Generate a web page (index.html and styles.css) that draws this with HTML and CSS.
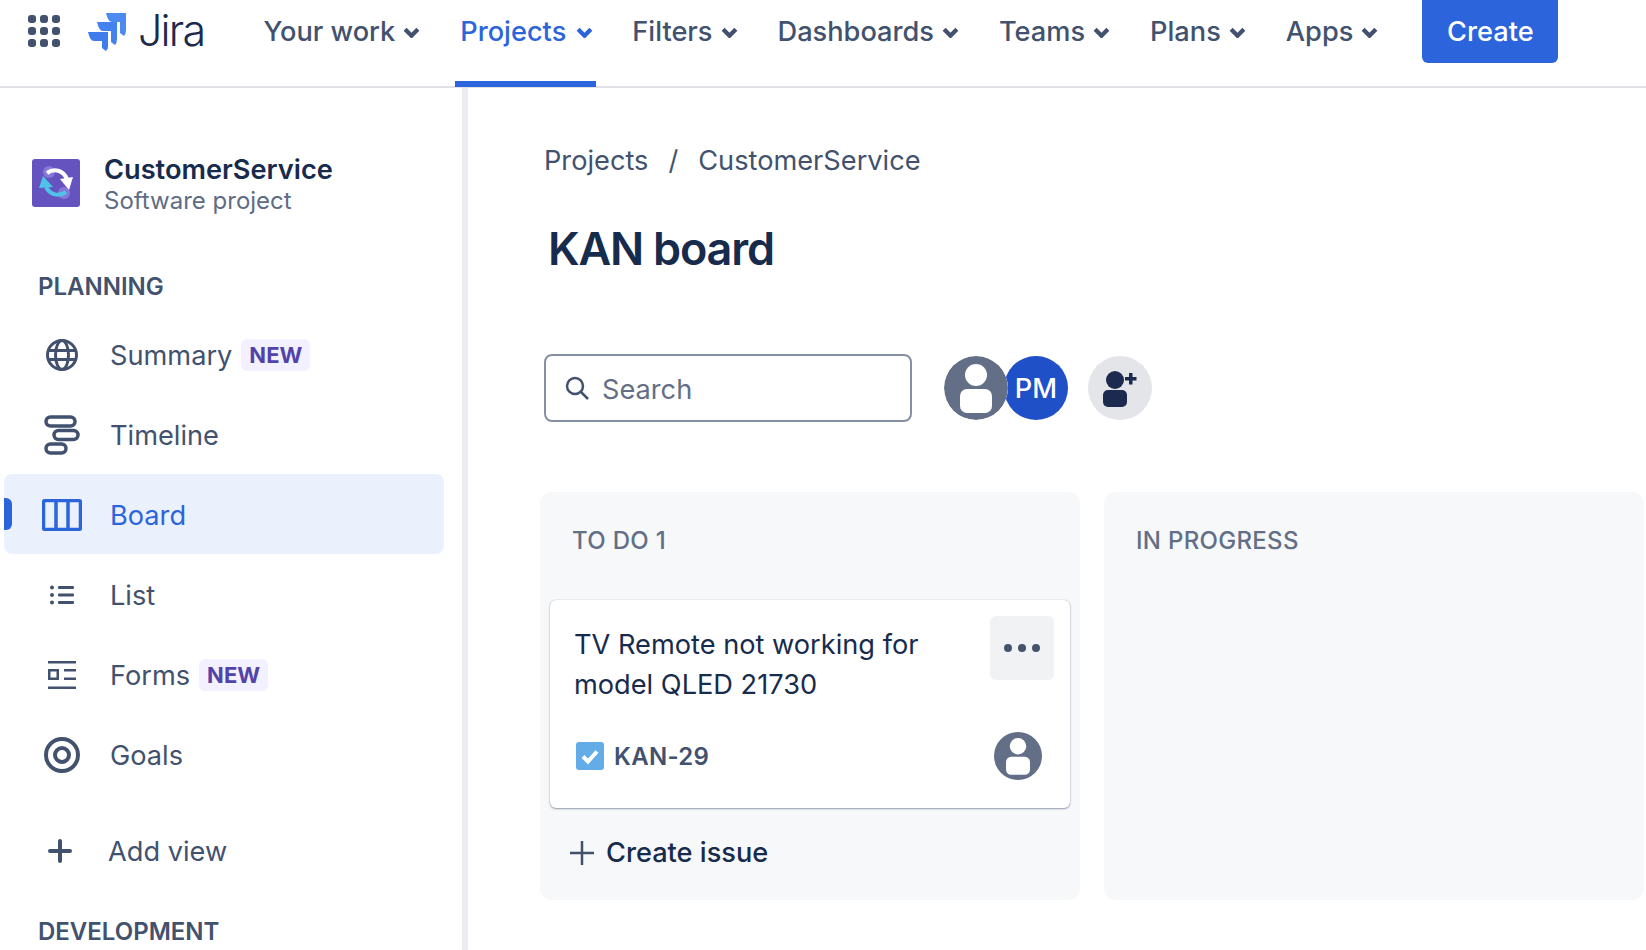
FILE: index.html
```html
<!DOCTYPE html>
<html lang="en">
<head>
  <meta charset="UTF-8">
  <meta name="viewport" content="width=device-width, initial-scale=1.0">
  <title>KAN board - Jira</title>
  <link rel="stylesheet" href="styles.css">
</head>
<body>
  <!-- Top Navigation -->
  <header class="topbar">
    <svg class="apps-icon" width="32" height="32" viewBox="0 0 32 32" fill="#42526e">
      <rect x="0" y="0" width="8" height="8" rx="3"/><rect x="12" y="0" width="8" height="8" rx="3"/><rect x="24" y="0" width="8" height="8" rx="3"/>
      <rect x="0" y="12" width="8" height="8" rx="3"/><rect x="12" y="12" width="8" height="8" rx="3"/><rect x="24" y="12" width="8" height="8" rx="3"/>
      <rect x="0" y="24" width="8" height="8" rx="3"/><rect x="12" y="24" width="8" height="8" rx="3"/><rect x="24" y="24" width="8" height="8" rx="3"/>
    </svg>
    <svg class="jira-mark" width="38" height="38" viewBox="0 0 38 38">
      <path d="M18 0H38V17Q38 21 36 23L32 20V9H24Q20 9 18 0Z" fill="#4c8af0"/>
      <path d="M9 9H29V26Q29 30 27 32L23 29V18H15Q11 18 9 9Z" fill="#4483ee"/>
      <path d="M0 19H20V34Q20 36 18 38L14 35V28H6Q2 28 0 19Z" fill="#3f7cec"/>
    </svg>
    <span class="jira-word">Jira</span>
    <nav class="topnav">
      <a class="topnav-item">Your work <svg class="chev" viewBox="0 0 16 10"><path d="M2 2l6 6 6-6"/></svg></a>
      <a class="topnav-item active">Projects <svg class="chev" viewBox="0 0 16 10"><path d="M2 2l6 6 6-6"/></svg></a>
      <a class="topnav-item">Filters <svg class="chev" viewBox="0 0 16 10"><path d="M2 2l6 6 6-6"/></svg></a>
      <a class="topnav-item">Dashboards <svg class="chev" viewBox="0 0 16 10"><path d="M2 2l6 6 6-6"/></svg></a>
      <a class="topnav-item">Teams <svg class="chev" viewBox="0 0 16 10"><path d="M2 2l6 6 6-6"/></svg></a>
      <a class="topnav-item">Plans <svg class="chev" viewBox="0 0 16 10"><path d="M2 2l6 6 6-6"/></svg></a>
      <a class="topnav-item">Apps <svg class="chev" viewBox="0 0 16 10"><path d="M2 2l6 6 6-6"/></svg></a>
    </nav>
    <button class="create-btn">Create</button>
  </header>

  <div class="layout">
    <!-- Sidebar -->
    <aside class="sidebar">
      <div class="project">
        <svg class="project-icon" width="48" height="48" viewBox="0 0 48 48">
          <rect width="48" height="48" rx="3" fill="#6554c0"/>
          <circle cx="17" cy="13" r="6" fill="#8777d9"/>
          <circle cx="32" cy="34" r="6" fill="#8777d9"/>
          <path d="M15 14C22 9 31 11 35 20" fill="none" stroke="#fff" stroke-width="4"/>
          <path d="M28 20L41 18L37 31Z" fill="#fff"/>
          <path d="M34 33C27 38 18 36 14 28" fill="none" stroke="#4fc3e8" stroke-width="4"/>
          <path d="M7 29L21 28L11 17Z" fill="#4fc3e8"/>
        </svg>
        <div class="project-text">
          <div class="project-name">CustomerService</div>
          <div class="project-type">Software project</div>
        </div>
      </div>

      <div class="side-heading">PLANNING</div>
      <a class="side-item">
        <span class="side-icon"><svg width="34" height="34" viewBox="0 0 34 34" class="line-icon medium"><circle cx="17" cy="17" r="14.5"/><ellipse cx="17" cy="17" rx="6.5" ry="14.5"/><path d="M3 12.5H31M3 21.5H31"/></svg></span>
        Summary <span class="new-tag">NEW</span>
      </a>
      <a class="side-item">
        <span class="side-icon"><svg width="36" height="40" viewBox="0 0 36 40" class="line-icon"><rect x="2" y="2" width="29" height="9" rx="4.5"/><rect x="10" y="15.500" width="24" height="9" rx="4.500"/><rect x="2" y="29" width="20" height="9" rx="4.500"/></svg></span>
        Timeline
      </a>
      <a class="side-item active">
        <span class="side-icon"><svg width="40" height="32" viewBox="0 0 40 32" class="line-icon"><rect x="1.500" y="1.500" width="37" height="29" rx="2"/><path d="M14 2V30M26 2V30"/></svg></span>
        Board
      </a>
      <a class="side-item">
        <span class="side-icon"><svg width="24" height="20" viewBox="0 0 24 20" fill="#42526e"><circle cx="2" cy="2.500" r="2"/><circle cx="2" cy="10" r="2"/><circle cx="2" cy="17.500" r="2"/><rect x="8" y="1" width="16" height="3" rx="1"/><rect x="8" y="8.500" width="16" height="3" rx="1"/><rect x="8" y="16" width="16" height="3" rx="1"/></svg></span>
        List
      </a>
      <a class="side-item">
        <span class="side-icon"><svg width="28" height="28" viewBox="0 0 28 28" fill="#42526e"><rect width="28" height="2.500"/><rect y="25.500" width="28" height="2.500"/><path d="M0 8h11v11H0zM2.500 10.500v6h6v-6z" fill-rule="evenodd"/><rect x="16" y="8" width="12" height="2.500"/><rect x="16" y="16.500" width="12" height="2.500"/></svg></span>
        Forms <span class="new-tag">NEW</span>
      </a>
      <a class="side-item">
        <span class="side-icon"><svg width="36" height="36" viewBox="0 0 36 36" class="line-icon thick"><circle cx="18" cy="18" r="16"/><circle cx="18" cy="18" r="7"/></svg></span>
        Goals
      </a>
      <a class="side-item add-view">
        <span class="side-icon"><svg width="24" height="24" viewBox="0 0 24 24" class="line-icon round"><path d="M12 2V22M2 12H22"/></svg></span>
        Add view
      </a>
      <div class="side-heading dev">DEVELOPMENT</div>
    </aside>

    <!-- Board -->
    <main class="content">
      <div class="breadcrumbs"><span>Projects</span><span class="sep">/</span><span>CustomerService</span></div>
      <h1 class="page-title">KAN board</h1>

      <div class="toolbar">
        <div class="search">
          <svg width="26" height="26" viewBox="0 0 26 26" class="line-icon thin"><circle cx="11" cy="11" r="8"/><path d="M17 17L24 24"/></svg>
          <span class="search-label">Search</span>
        </div>
        <div class="avatars">
          <svg class="avatar user" width="64" height="64" viewBox="0 0 64 64">
            <circle cx="32" cy="32" r="32" fill="#626f86"/>
            <ellipse cx="32" cy="19" rx="11" ry="11" fill="#fff"/>
            <rect x="16" y="33" width="32" height="24" rx="7" fill="#fff"/>
          </svg>
          <span class="avatar pm">PM</span>
        </div>
        <span class="add-person">
          <svg width="38" height="38" viewBox="0 0 38 38" fill="#1b2a4e">
            <circle cx="14" cy="11" r="9"/>
            <rect x="2" y="21" width="24" height="17" rx="5"/>
            <path d="M28 4h3.500v4h4v3.500h-4v4H28v-4h-4V8h4z"/>
          </svg>
        </span>
      </div>

      <div class="columns">
        <section class="column">
          <div class="column-title">TO DO 1</div>
          <article class="card">
            <div class="card-top">
              <p class="card-title">TV Remote not working for model QLED 21730</p>
              <span class="more-btn"><i></i><i></i><i></i></span>
            </div>
            <div class="card-bottom">
              <svg width="28" height="28" viewBox="0 0 28 28"><rect width="28" height="28" rx="3" fill="#64ace8"/><path d="M7 14.500l5 5 9-10" fill="none" stroke="#fff" stroke-width="4"/></svg>
              <span class="issue-key">KAN-29</span>
              <svg class="card-avatar" width="48" height="48" viewBox="0 0 64 64">
                <circle cx="32" cy="32" r="32" fill="#626f86"/>
                <ellipse cx="32" cy="19" rx="11" ry="11" fill="#fff"/>
                <rect x="16" y="33" width="32" height="24" rx="7" fill="#fff"/>
              </svg>
            </div>
          </article>
          <div class="create-issue">
            <svg width="24" height="24" viewBox="0 0 24 24" class="line-icon thin"><path d="M12 0V24M0 12H24"/></svg>
            Create issue
          </div>
        </section>
        <section class="column">
          <div class="column-title">IN PROGRESS</div>
        </section>
      </div>
    </main>
  </div>
</body>
</html>
```

FILE: styles.css
```css
/* General Reset */
body, h1, p {
  margin: 0;
  padding: 0;
}

html, body {
  height: 100%;
  overflow: hidden;
}

body {
  background: #fff;
  color: #172b4d;
  font-family: 'Inter', 'Liberation Sans', sans-serif;
  font-size: 27.2px;
  display: flex;
  flex-direction: column;
}

.line-icon {
  fill: none;
  stroke: #42526e;
  stroke-width: 3.5;
}

.line-icon.medium {
  stroke-width: 3;
}

.line-icon.thick {
  stroke-width: 4;
}

.line-icon.round {
  stroke-width: 4;
  stroke-linecap: round;
}

.line-icon.thin {
  stroke-width: 2.5;
}

/* Top Navigation */
.topbar {
  height: 88px;
  flex: none;
  box-sizing: border-box;
  border-bottom: 2px solid #dfe1e6;
  display: flex;
  align-items: flex-start;
  padding-left: 28px;
}

.apps-icon {
  margin-top: 15px;
}

.jira-mark {
  margin: 13px 0 0 28px;
}

.jira-word {
  font-size: 43px;
  line-height: 60px;
  font-weight: 300;
  letter-spacing: -1.8px;
  color: #1b2a4e;
  margin-left: 12px;
  width: 66px;
}

.topnav {
  display: flex;
  margin-left: 54.5px;
  gap: 32px;
}

.topnav-item {
  height: 87px;
  box-sizing: border-box;
  padding: 14px 3px 0 5px;
  line-height: 36px;
  font-weight: 500;
  color: #42526e;
  white-space: nowrap;
  display: flex;
  align-items: flex-start;
  gap: 8px;
}

.topnav-item.active {
  color: #2c64dc;
  border-bottom: 6px solid #2c64dc;
  gap: 10px;
  margin-right: -1px;
}

.chev {
  width: 17px;
  height: 11px;
  margin-top: 13px;
  fill: none;
  stroke: currentColor;
  stroke-width: 4;
}

.create-btn {
  margin-left: 41px;
  width: 136px;
  height: 63px;
  border: none;
  border-radius: 0 0 6px 6px;
  background: #2c64dc;
  color: #fff;
  font: 500 27.2px 'Inter', sans-serif;
}

/* Sidebar */
.layout {
  flex: 1;
  display: flex;
  min-height: 0;
}

.sidebar {
  width: 468px;
  flex: none;
  box-sizing: border-box;
  border-right: 6px solid #ebecf0;
  padding: 0 18px 0 4px;
}

.project {
  display: flex;
  align-items: center;
  gap: 24px;
  margin: 63px 0 0 28px;
}

.project-icon {
  flex: none;
}

.project-text {
  margin-top: 2px;
}

.project-name {
  font-weight: 600;
  line-height: 34px;
  color: #172b4d;
}

.project-type {
  font-size: 24px;
  line-height: 28px;
  color: #5e6c84;
}

.side-heading {
  font-size: 24px;
  font-weight: 600;
  color: #42526e;
  line-height: 30px;
  margin: 57px 0 0 34px;
}

.side-heading.dev {
  margin-top: 27px;
}

.side-item {
  height: 80px;
  box-sizing: border-box;
  padding-top: 2px;
  display: flex;
  align-items: center;
  color: #42526e;
  position: relative;
  border-radius: 8px;
}

.side-heading + .side-item {
  margin-top: 12px;
}

.side-icon {
  width: 106px;
  padding-left: 10px;
  box-sizing: border-box;
  display: flex;
  justify-content: center;
  flex: none;
}

.side-item.active {
  background: #eaf1fd;
  color: #2c64dc;
}

.side-item.active .line-icon {
  stroke: #2c64dc;
}

/* blue marker on the selected row */
.side-item.active::before {
  content: "";
  position: absolute;
  left: 0;
  top: 24px;
  width: 8px;
  height: 32px;
  background: #2c64dc;
  border-radius: 0 6px 6px 0;
}

.new-tag {
  margin-left: 9px;
  background: #f3f0ff;
  color: #5243aa;
  font-size: 22px;
  font-weight: 700;
  line-height: 32px;
  padding: 0 8px;
  border-radius: 6px;
}

.add-view {
  margin-top: 16px;
}

.add-view .side-icon {
  width: 104px;
  padding: 0 8px 0 16px;
}

/* Main Content */
.content {
  flex: 1;
  min-width: 0;
  padding: 53px 0 0 72px;
}

.breadcrumbs {
  display: flex;
  gap: 20px;
  color: #42526e;
  line-height: 40px;
  margin-left: 4px;
}

.page-title {
  font-size: 45px;
  font-weight: 600;
  letter-spacing: -1.2px;
  line-height: 60px;
  margin: 38px 0 0 8px;
  color: #172b4d;
}

.toolbar {
  display: flex;
  align-items: center;
  margin: 75px 0 0 4px;
}

.search {
  width: 368px;
  height: 68px;
  box-sizing: border-box;
  border: 2px solid #8590a2;
  border-radius: 8px;
  display: flex;
  align-items: center;
  gap: 12px;
  padding-left: 18px;
  color: #626f86;
}

.search-label {
  padding-top: 2px;
}

.avatars {
  display: flex;
  margin-left: 32px;
}

.avatar {
  width: 64px;
  height: 64px;
  border-radius: 50%;
  flex: none;
}

.avatar.user {
  position: relative;
  z-index: 1;
  background: #fff;
}

.avatar.pm {
  margin-left: -4px;
  background: #2050c8;
  color: #fff;
  font-weight: 500;
  display: flex;
  align-items: center;
  justify-content: center;
}

.add-person {
  width: 64px;
  height: 64px;
  margin-left: 20px;
  border-radius: 50%;
  background: #e4e5e9;
  display: flex;
  align-items: center;
  justify-content: center;
}

/* Columns */
.columns {
  display: flex;
  gap: 24px;
  margin-top: 70px;
}

.column {
  width: 540px;
  height: 408px;
  flex: none;
  box-sizing: border-box;
  background: #f7f8f9;
  border-radius: 12px;
  padding: 0 10px;
}

.column-title {
  font-size: 24px;
  font-weight: 500;
  color: #626f86;
  line-height: 30px;
  padding: 34px 0 0 22px;
  letter-spacing: 0.3px;
}

.card {
  margin-top: 44px;
  height: 208px;
  box-sizing: border-box;
  background: #fff;
  border-radius: 6px;
  box-shadow: 0 1px 2px rgba(9, 30, 66, 0.4), 0 0 1px rgba(9, 30, 66, 0.3);
  padding: 16px 16px 0 24px;
}

.card-top {
  display: flex;
  justify-content: space-between;
}

.card-title {
  width: 370px;
  line-height: 40px;
  padding-top: 9px;
}

.more-btn {
  width: 64px;
  height: 64px;
  background: #f1f2f4;
  border-radius: 6px;
  display: flex;
  align-items: center;
  justify-content: center;
  gap: 6px;
}

.more-btn i {
  width: 8px;
  height: 8px;
  border-radius: 50%;
  background: #44546f;
}

.card-bottom {
  display: flex;
  align-items: center;
  margin-top: 27px;
  padding-left: 2px;
}

.issue-key {
  font-size: 24px;
  font-weight: 600;
  color: #42526e;
  margin-left: 10px;
  letter-spacing: 0.3px;
}

.card-avatar {
  margin-left: auto;
  margin-right: 12px;
}

.create-issue {
  display: flex;
  align-items: center;
  gap: 12px;
  font-weight: 500;
  margin: 27px 0 0 20px;
  line-height: 36px;
}
```
